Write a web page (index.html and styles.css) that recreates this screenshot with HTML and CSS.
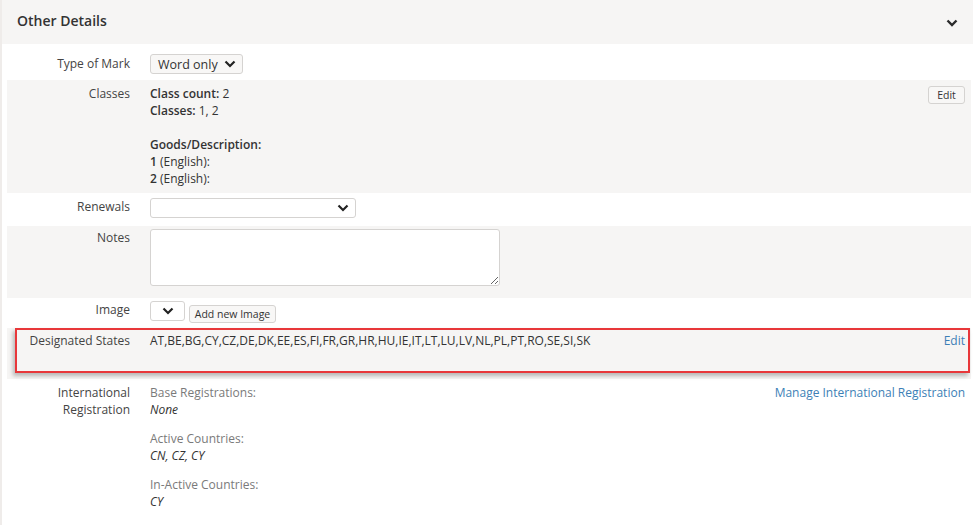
FILE: index.html
```html
<!DOCTYPE html>
<html lang="en">
<head>
  <meta charset="UTF-8">
  <title>Other Details</title>
  <link rel="stylesheet" href="styles.css">
</head>
<body>
  <div class="panel">
    <div class="panel-head">
      <h2>Other Details</h2>
      <svg class="chev" width="12" height="8" viewBox="0 0 12 8"><path d="M1.5 1.5 L6 6 L10.5 1.5" fill="none" stroke="#2b2b2b" stroke-width="2.4"/></svg>
    </div>

    <div class="panel-body">
      <div class="row row-mark">
        <div class="label">Type of Mark</div>
        <div class="value">
          <div class="select select-mark">
            <span>Word only</span>
            <svg width="12" height="8" viewBox="0 0 12 8"><path d="M1.5 1.5 L6 6 L10.5 1.5" fill="none" stroke="#222" stroke-width="2.2"/></svg>
          </div>
        </div>
      </div>

      <div class="row alt row-classes">
        <div class="label">Classes</div>
        <div class="value split">
          <div>
            <b>Class count:</b> 2<br>
            <b>Classes:</b> 1, 2<br>
            <br>
            <b>Goods/Description:</b><br>
            <b>1</b> (English):<br>
            <b>2</b> (English):
          </div>
          <button class="btn btn-edit">Edit</button>
        </div>
      </div>

      <div class="row row-renew">
        <div class="label">Renewals</div>
        <div class="value">
          <div class="select select-renew">
            <span></span>
            <svg width="12" height="8" viewBox="0 0 12 8"><path d="M1.5 1.5 L6 6 L10.5 1.5" fill="none" stroke="#222" stroke-width="2.2"/></svg>
          </div>
        </div>
      </div>

      <div class="row alt row-notes">
        <div class="label">Notes</div>
        <div class="value">
          <textarea class="notes"></textarea>
        </div>
      </div>

      <div class="row row-image">
        <div class="label">Image</div>
        <div class="value inline">
          <div class="select select-image">
            <svg width="12" height="8" viewBox="0 0 12 8"><path d="M1.5 1.5 L6 6 L10.5 1.5" fill="none" stroke="#222" stroke-width="2.2"/></svg>
          </div>
          <button class="btn btn-add">Add new Image</button>
        </div>
      </div>

      <div class="row-wrap alt">
        <div class="row highlight">
          <div class="label">Designated States</div>
          <div class="value split">
            <div>AT,BE,BG,CY,CZ,DE,DK,EE,ES,FI,FR,GR,HR,HU,IE,IT,LT,LU,LV,NL,PL,PT,RO,SE,SI,SK</div>
            <a class="link" href="#">Edit</a>
          </div>
        </div>
      </div>

      <div class="row row-intl">
        <div class="label">International<br>Registration</div>
        <div class="value split">
          <div>
            <div class="group">
              <div class="muted">Base Registrations:</div>
              <i>None</i>
            </div>
            <div class="group">
              <div class="muted">Active Countries:</div>
              <i>CN, CZ, CY</i>
            </div>
            <div class="group">
              <div class="muted">In-Active Countries:</div>
              <i>CY</i>
            </div>
          </div>
          <a class="link" href="#">Manage International Registration</a>
        </div>
      </div>
    </div>
  </div>
</body>
</html>
```

FILE: styles.css
```css
body {
  margin: 0;
  font-family: 'Open Sans', 'Liberation Sans', sans-serif;
  font-size: 12px;
  line-height: 17px;
  color: #333;
  background: #fff;
}
.panel {
  border-left: 2px solid #efecea;
  min-height: 525px;
}
.panel-head {
  display: flex;
  align-items: center;
  justify-content: space-between;
  height: 44px;
  padding: 0 15px;
  background: #f6f5f4;
}
.panel-head h2 {
  margin: 0 0 3px;
  font-size: 14px;
  font-weight: 600;
  color: #333;
}
.chev {
  margin-top: 1px;
}
.panel-body {
  padding: 0 2px 0 5px;
}
.row {
  display: grid;
  grid-template-columns: 123px 1fr;
  column-gap: 20px;
  padding: 5px 6px 5px 0;
}
.alt {
  background: #f6f5f4;
}
.label {
  text-align: right;
  color: #444;
}
.value b {
  font-weight: 600;
}
.split {
  display: flex;
  justify-content: space-between;
  align-items: flex-start;
}
.inline {
  display: flex;
  align-items: flex-start;
  gap: 4px;
}
.row-mark {
  padding-top: 11px;
  padding-bottom: 6px;
}
.row-mark .select {
  margin-top: -1px;
}
.row-classes {
  padding-top: 5px;
  padding-bottom: 6px;
}
.row-classes .btn-edit {
  margin-top: 1px;
}
.row-renew {
  padding-bottom: 8px;
}
.row-notes {
  padding-top: 3px;
  padding-bottom: 12px;
}
.row-image {
  padding-top: 3px;
  padding-bottom: 5px;
}
.select {
  display: flex;
  align-items: center;
  justify-content: space-between;
  box-sizing: border-box;
  height: 20px;
  border: 1px solid #d5d3d1;
  border-radius: 3px;
  background: #fff;
  padding: 0 6px 0 7px;
  font-size: 12px;
}
.select-mark {
  width: 93px;
  background: #f8f7f6;
  font-size: 12.5px;
}
.select-renew {
  width: 206px;
}
.select-image {
  width: 35px;
  justify-content: center;
  padding: 0;
}
.notes {
  display: block;
  box-sizing: border-box;
  width: 350px;
  height: 57px;
  border: 1px solid #d5d3d1;
  border-radius: 3px;
  background: #fff;
  margin: 0;
}
.btn {
  font-family: 'Open Sans', 'Liberation Sans', sans-serif;
  font-size: 10.5px;
  line-height: 15px;
  color: #333;
  background: #f8f7f6;
  border: 1px solid #d5d3d1;
  border-radius: 3px;
  padding: 0 9px;
  height: 18px;
  cursor: pointer;
}
.btn-edit {
  width: 37px;
  padding: 0;
}
.btn-add {
  margin-top: 4px;
  width: 87px;
  padding: 0;
}
.row-wrap {
  padding: 0 1px 6px 8px;
}
.highlight {
  grid-template-columns: 113px 1fr;
  border: 2px solid #e8373a;
  padding: 2px 3px 22px 0;
  box-shadow: -2px 3px 4px rgba(0,0,0,0.25);
}
.link {
  color: #3d7fb6;
  text-decoration: none;
  font-size: 12px;
}
.row-intl {
  padding-top: 5px;
}
.muted {
  color: #7a7a7a;
}
.group {
  margin-bottom: 12px;
}
.group i {
  color: #333;
}
```
